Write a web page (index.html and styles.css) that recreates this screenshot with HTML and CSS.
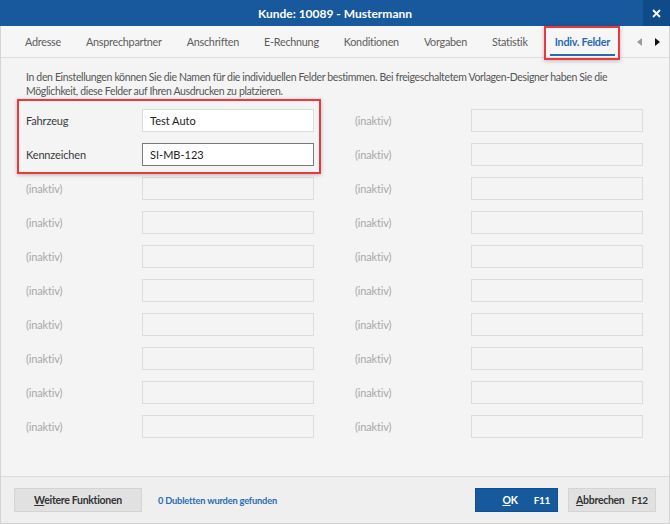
FILE: index.html
```html
<!DOCTYPE html>
<html lang="de">
<head>
    <meta charset="UTF-8">
    <title>Kunde: 10089 - Mustermann</title>
    <link rel="stylesheet" href="styles.css">
</head>
<body>
    <div class="window">
        <div class="titlebar">
            <span class="title">Kunde: 10089 - Mustermann</span>
            <button class="close-btn">
                <svg width="9" height="9" viewBox="0 0 9 9"><path d="M1 1L8 8M8 1L1 8" stroke="#fff" stroke-width="1.8"/></svg>
            </button>
        </div>

        <div class="tabbar">
            <div class="tabs">
                <span class="tab">Adresse</span>
                <span class="tab">Ansprechpartner</span>
                <span class="tab">Anschriften</span>
                <span class="tab">E-Rechnung</span>
                <span class="tab">Konditionen</span>
                <span class="tab">Vorgaben</span>
                <span class="tab">Statistik</span>
                <span class="tab active">Indiv. Felder<span class="mark tab-mark"></span></span>
            </div>
            <div class="tab-scroll">
                <svg width="5" height="8" viewBox="0 0 5 8"><path d="M5 0L0 4L5 8Z" fill="#9a9a9a"/></svg>
                <svg width="5" height="8" viewBox="0 0 5 8"><path d="M0 0L5 4L0 8Z" fill="#111"/></svg>
            </div>
        </div>

        <div class="content">
            <p class="hint">In den Einstellungen können Sie die Namen für die individuellen Felder bestimmen. Bei freigeschaltetem Vorlagen-Designer haben Sie die Möglichkeit, diese Felder auf Ihren Ausdrucken zu platzieren.</p>

            <div class="fields">
                <span class="mark field-mark"></span>
                <div class="field-col">
                    <div class="field"><label>Fahrzeug</label><input class="input" value="Test Auto"></div>
                    <div class="field"><label>Kennzeichen</label><input class="input focused" value="SI-MB-123"></div>
                    <div class="field off"><label>(inaktiv)</label><input class="input" disabled></div>
                    <div class="field off"><label>(inaktiv)</label><input class="input" disabled></div>
                    <div class="field off"><label>(inaktiv)</label><input class="input" disabled></div>
                    <div class="field off"><label>(inaktiv)</label><input class="input" disabled></div>
                    <div class="field off"><label>(inaktiv)</label><input class="input" disabled></div>
                    <div class="field off"><label>(inaktiv)</label><input class="input" disabled></div>
                    <div class="field off"><label>(inaktiv)</label><input class="input" disabled></div>
                    <div class="field off"><label>(inaktiv)</label><input class="input" disabled></div>
                </div>
                <div class="field-col">
                    <div class="field off"><label>(inaktiv)</label><input class="input" disabled></div>
                    <div class="field off"><label>(inaktiv)</label><input class="input" disabled></div>
                    <div class="field off"><label>(inaktiv)</label><input class="input" disabled></div>
                    <div class="field off"><label>(inaktiv)</label><input class="input" disabled></div>
                    <div class="field off"><label>(inaktiv)</label><input class="input" disabled></div>
                    <div class="field off"><label>(inaktiv)</label><input class="input" disabled></div>
                    <div class="field off"><label>(inaktiv)</label><input class="input" disabled></div>
                    <div class="field off"><label>(inaktiv)</label><input class="input" disabled></div>
                    <div class="field off"><label>(inaktiv)</label><input class="input" disabled></div>
                    <div class="field off"><label>(inaktiv)</label><input class="input" disabled></div>
                </div>
            </div>
        </div>

        <div class="footer">
            <button class="btn btn-more"><u>W</u>eitere Funktionen</button>
            <a class="dupes">0 Dubletten wurden gefunden</a>
            <div class="actions">
                <button class="btn btn-ok"><span><u>O</u>K</span><span class="key">F11</span></button>
                <button class="btn btn-cancel"><span><u>A</u>bbrechen</span><span class="key">F12</span></button>
            </div>
        </div>
    </div>
</body>
</html>
```

FILE: styles.css
```css
body {
    margin: 0;
    font-family: Lato, "Open Sans", sans-serif;
    font-size: 11px;
    letter-spacing: -0.15px;
    color: #4a4a4a;
    background: #f4f4f4;
}
.window {
    width: 670px;
    height: 524px;
    display: flex;
    flex-direction: column;
    box-sizing: border-box;
    border-left: 1px solid #d4d4d4;
    border-right: 1px solid #d4d4d4;
    border-bottom: 1px solid #d0d0d0;
}

/* title bar */
.titlebar {
    height: 26px;
    background: #17599c;
    display: flex;
    align-items: center;
    justify-content: center;
    position: relative;
    margin: 0 -1px;
}
.title {
    color: #fff;
    font-size: 12px;
    font-weight: 700;
    letter-spacing: 0;
}
.close-btn {
    position: absolute;
    right: 0;
    top: 0;
    width: 27px;
    height: 26px;
    border: 0;
    padding: 0;
    background: #0f4b88;
    display: flex;
    align-items: center;
    justify-content: center;
}

/* tabs */
.tabbar {
    height: 31px;
    display: flex;
    align-items: stretch;
    background: #f6f6f6;
    border-bottom: 1px solid #dedede;
}
.tabs {
    display: flex;
    gap: 25px;
    padding-left: 24px;
    flex: 1;
}
.tab {
    position: relative;
    display: flex;
    align-items: center;
    color: #5c5c5c;
    font-size: 10.8px;
    letter-spacing: -0.25px;
    white-space: nowrap;
}
.tab.active {
    color: #2a6bb0;
    font-weight: 700;
    margin-left: 2px;
}
.tab.active::after {
    content: "";
    position: absolute;
    left: -5px;
    right: -5px;
    bottom: 1px;
    height: 2px;
    background: #2a6bb0;
}
.tab-scroll {
    display: flex;
    align-items: center;
    gap: 13px;
    padding-right: 9px;
}

/* red annotation frames */
.mark {
    position: absolute;
    border: 2px solid #e8393f;
    box-shadow: 0 1px 4px rgba(0, 0, 0, 0.25);
    pointer-events: none;
}
.tab-mark {
    left: -11px;
    right: -10px;
    top: 0;
    bottom: -3px;
}

/* content */
.content {
    flex: 1;
    padding: 12px 0 0 25px;
}
.hint {
    margin: 0 0 11px;
    width: 615px;
    font-size: 10.5px;
    line-height: 14px;
    color: #555;
    letter-spacing: -0.35px;
}
.fields {
    position: relative;
    display: flex;
    gap: 41px;
}
.field-mark {
    left: -9px;
    top: -10px;
    width: 300px;
    height: 71px;
}
.field-col {
    display: flex;
    flex-direction: column;
    gap: 11px;
}
.field {
    display: flex;
    align-items: center;
    height: 23px;
}
.field label {
    width: 116px;
    color: #3a3a3a;
}
.field.off label {
    color: #a8a8a8;
}
.input {
    width: 172px;
    height: 23px;
    box-sizing: border-box;
    border: 1px solid #dcdcdc;
    background: #fff;
    padding: 0 7px;
    font: inherit;
    color: #222;
}
.input.focused {
    border-color: #7a7a7a;
}
.input:disabled {
    background: #f4f4f4;
}

/* footer */
.footer {
    height: 46px;
    display: flex;
    align-items: center;
    padding: 0 13px;
    background: #efefef;
    border-top: 1px solid #dcdcdc;
}
.btn {
    height: 24px;
    border: 1px solid #d4d4d4;
    background: #e1e1e1;
    font: inherit;
    font-size: 10.5px;
    font-weight: 700;
    letter-spacing: -0.3px;
    color: #333;
    padding: 0;
}
.btn-more {
    width: 128px;
}
.dupes {
    margin-left: 16px;
    color: #2a6bb0;
    font-size: 9.3px;
    font-weight: 700;
    letter-spacing: -0.2px;
}
.actions {
    margin-left: auto;
    display: flex;
    gap: 10px;
}
.btn-ok {
    width: 83px;
    background: #16599c;
    border-color: #11508f;
    color: #fff;
    display: flex;
    justify-content: flex-end;
    align-items: center;
    gap: 16px;
    padding-right: 7px;
    box-sizing: border-box;
}
.btn-cancel {
    width: 88px;
    display: flex;
    justify-content: center;
    align-items: center;
    gap: 7px;
}
.key {
    font-size: 10px;
}
```
